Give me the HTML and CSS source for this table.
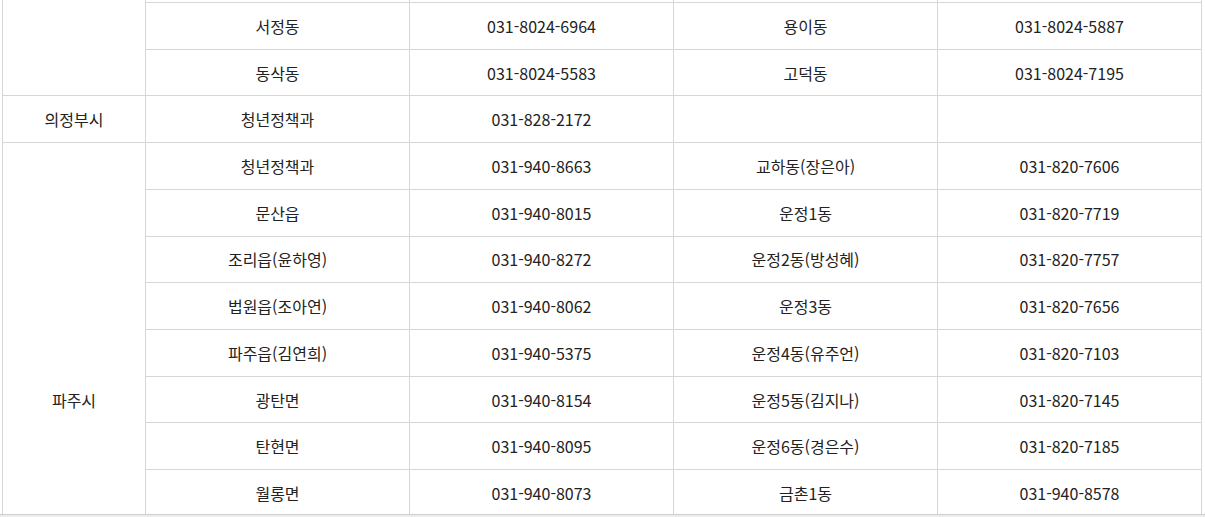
FILE: index.html
```html
<!DOCTYPE html>
<html lang="ko">
<head>
<meta charset="utf-8">
<link rel="stylesheet" href="styles.css">
</head>
<body>
<div class="page">
<div class="viewport">
<table class="contact">
<colgroup>
<col class="c-city"><col class="c-col"><col class="c-col"><col class="c-col"><col class="c-col">
</colgroup>
<tbody>
<tr class="cut"><td rowspan="3"></td><td></td><td></td><td></td><td></td></tr>
<tr><td>서정동</td><td>031-8024-6964</td><td>용이동</td><td>031-8024-5887</td></tr>
<tr><td>동삭동</td><td>031-8024-5583</td><td>고덕동</td><td>031-8024-7195</td></tr>
<tr><td>의정부시</td><td>청년정책과</td><td>031-828-2172</td><td></td><td></td></tr>
<tr><td rowspan="11">파주시</td><td>청년정책과</td><td>031-940-8663</td><td>교하동(장은아)</td><td>031-820-7606</td></tr>
<tr><td>문산읍</td><td>031-940-8015</td><td>운정1동</td><td>031-820-7719</td></tr>
<tr><td>조리읍(윤하영)</td><td>031-940-8272</td><td>운정2동(방성혜)</td><td>031-820-7757</td></tr>
<tr><td>법원읍(조아연)</td><td>031-940-8062</td><td>운정3동</td><td>031-820-7656</td></tr>
<tr><td>파주읍(김연희)</td><td>031-940-5375</td><td>운정4동(유주언)</td><td>031-820-7103</td></tr>
<tr><td>광탄면</td><td>031-940-8154</td><td>운정5동(김지나)</td><td>031-820-7145</td></tr>
<tr><td>탄현면</td><td>031-940-8095</td><td>운정6동(경은수)</td><td>031-820-7185</td></tr>
<tr><td>월롱면</td><td>031-940-8073</td><td>금촌1동</td><td>031-940-8578</td></tr>
<tr><td></td><td></td><td></td><td></td></tr>
<tr><td></td><td></td><td></td><td></td></tr>
<tr><td></td><td></td><td></td><td></td></tr>
</tbody>
</table>
</div>
</div>
</body>
</html>
```
FILE: styles.css
```css
html, body {
  margin: 0;
  padding: 0;
  background: #ffffff;
}
body {
  font-family: "Noto Sans CJK KR", "Noto Sans", sans-serif;
  color: #222222;
  font-size: 16px;
}
.page {
  width: 1205px;
  height: 517px;
  overflow: hidden;
  background: #ececec;
}
.viewport {
  height: 514px;
  overflow: hidden;
  padding-left: 2px;
  background: #ffffff;
  border-bottom: 1px solid #d0d0d0;
}
.contact {
  border-collapse: collapse;
  table-layout: fixed;
  width: 1200px;
  background: #ffffff;
}
.c-city { width: 143px; }
.c-col { width: 264px; }
.contact td {
  border: 1px solid #d6d6d6;
  text-align: center;
  vertical-align: middle;
  height: 45.72px;
  padding: 0;
  line-height: 20px;
}
.contact tr.cut td {
  height: 2px;
  border-top: 0;
}
```
